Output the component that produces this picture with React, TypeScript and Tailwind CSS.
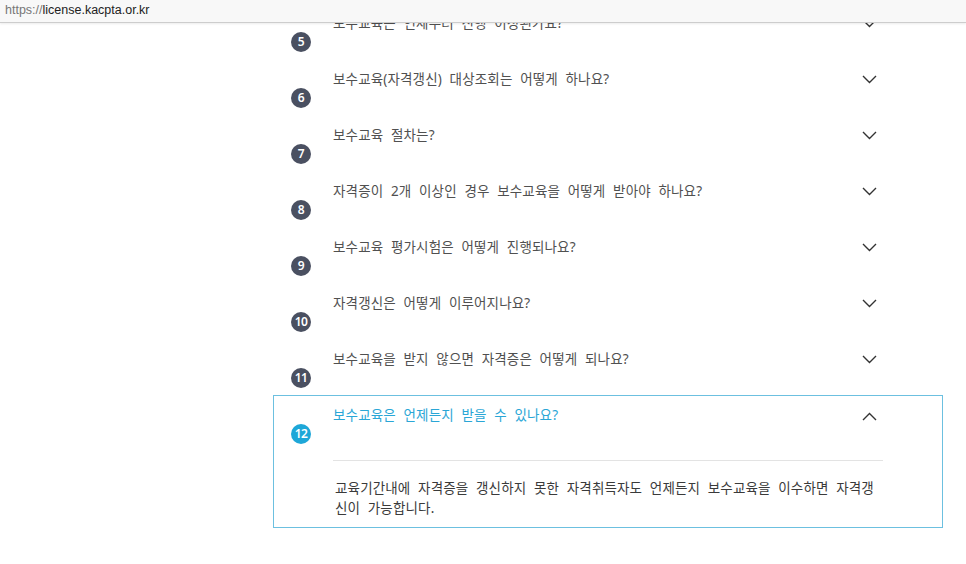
import React from 'react';

type Faq = {
  no: number;
  q: string;
  a?: string;
};

const faqs: Faq[] = [
  { no: 5, q: '보수교육은 언제부터 진행 이정된가요?' },
  { no: 6, q: '보수교육(자격갱신) 대상조회는 어떻게 하나요?' },
  { no: 7, q: '보수교육 절차는?' },
  { no: 8, q: '자격증이 2개 이상인 경우 보수교육을 어떻게 받아야 하나요?' },
  { no: 9, q: '보수교육 평가시험은 어떻게 진행되나요?' },
  { no: 10, q: '자격갱신은 어떻게 이루어지나요?' },
  { no: 11, q: '보수교육을 받지 않으면 자격증은 어떻게 되나요?' },
  {
    no: 12,
    q: '보수교육은 언제든지 받을 수 있나요?',
    a: '교육기간내에 자격증을 갱신하지 못한 자격취득자도 언제든지 보수교육을 이수하면 자격갱신이 가능합니다.',
  },
];

const font = { fontFamily: '"Noto Sans", "Noto Sans CJK KR", sans-serif' };

function Chevron({ up }: { up?: boolean }) {
  return (
    <svg width="15" height="9" viewBox="0 0 15 9" fill="none">
      <path
        d={up ? 'M1 8 L7.5 1.5 L14 8' : 'M1 1 L7.5 7.5 L14 1'}
        stroke="#333"
        strokeWidth="1.4"
      />
    </svg>
  );
}

function FaqRow({ item, open }: { item: Faq; open: boolean }) {
  return (
    <div
      className={`w-[670px] border ${open ? 'border-[#6cc0e0]' : 'border-transparent'}`}
    >
      <div className="flex h-[54px] items-start">
        <div className="w-[59px] shrink-0 pt-[28px] pl-[17px]">
          <div
            className={`flex h-[20px] w-[20px] items-center justify-center rounded-full text-[12px] font-semibold tracking-[-0.5px] text-white ${
              open ? 'bg-[#1ea7d8]' : 'bg-[#4a5061]'
            }`}
          >
            {item.no}
          </div>
        </div>
        <div
          className={`flex-1 pt-[10px] text-[13.5px] leading-[18px] tracking-[0.15px] [word-spacing:4px] ${
            open ? 'text-[#2aa6d6]' : 'text-[#505050]'
          }`}
        >
          {item.q}
        </div>
        <div className={`mr-[65px] shrink-0 ${open ? 'pt-[16px]' : 'pt-[15px]'}`}>
          <Chevron up={open} />
        </div>
      </div>
      {open && item.a && (
        <div className="ml-[59px] mr-[59px] mt-[10px] border-t border-[#e3e3e3] pt-[17px] pb-[9px]">
          <p className="w-[552px] break-all pl-[2px] text-[13.5px] leading-[20px] tracking-[0.15px] text-[#3a3a3a] [word-spacing:4px]">
            {item.a}
          </p>
        </div>
      )}
    </div>
  );
}

export default function App() {
  return (
    <div className="relative h-[564px] w-[966px] overflow-hidden bg-white" style={font}>
      <div
        className="relative z-10 h-[23px] border-b border-[#cdcdcd] bg-[#f8f8f8] pl-[5px] text-[12.5px] leading-[20px] shadow-[0_1px_2px_rgba(0,0,0,0.08)]"
        style={{ fontFamily: '"Liberation Sans", Arial, sans-serif' }}
      >
        <span className="text-[#777]">https://</span>
        <span className="text-[#222]">license.kacpta.or.kr</span>
      </div>
      <div className="-mt-[20px] ml-[273px] flex flex-col">
        {faqs.map((f) => (
          <FaqRow key={f.no} item={f} open={!!f.a} />
        ))}
      </div>
    </div>
  );
}
